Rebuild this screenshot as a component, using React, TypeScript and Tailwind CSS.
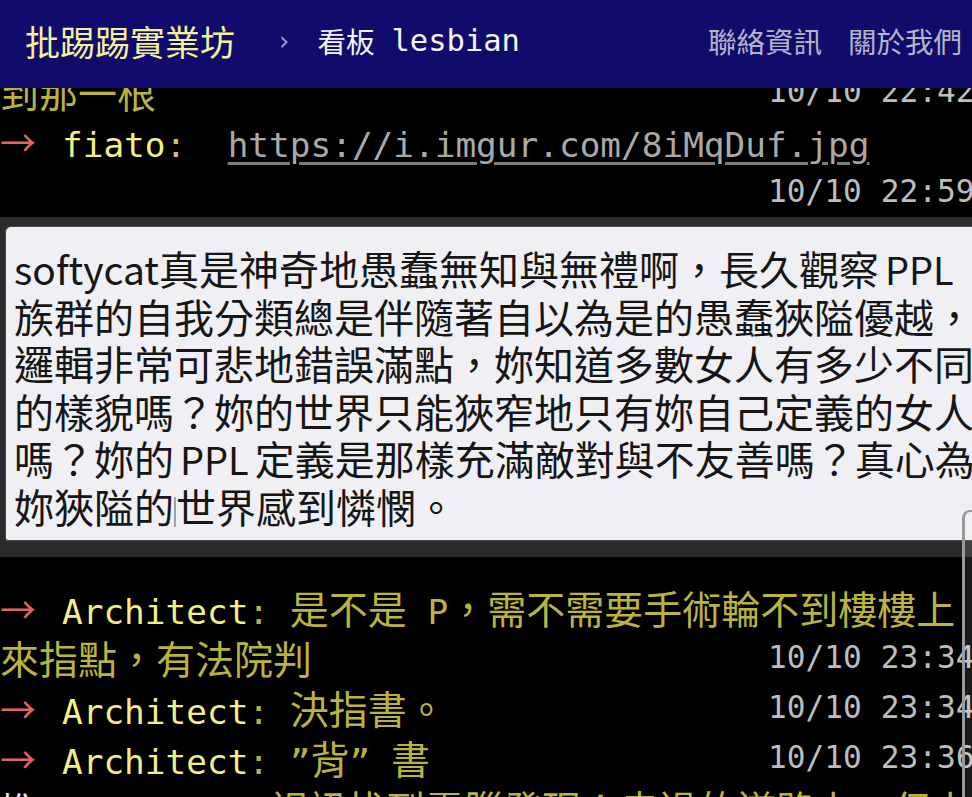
import React from "react";

const MONO_RE = /[\x00-\x7F”“]/;

function Mixed({ text }: { text: string }) {
  const parts = text.match(/[\x00-\x7F”“]+|[^\x00-\x7F”“]+/g) || [];
  return (
    <>
      {parts.map((p, i) =>
        MONO_RE.test(p[0]) ? (
          <span key={i} className="font-['DejaVu_Sans_Mono',monospace] text-[34.4px]">
            {p}
          </span>
        ) : (
          <span key={i} className="font-['Noto_Sans_CJK_TC',sans-serif] text-[39px]">
            {p}
          </span>
        )
      )}
    </>
  );
}

function Row({ children, time }: { children: React.ReactNode; time?: string }) {
  return (
    <div className="h-[50px] flex whitespace-pre">
      <div className="min-w-[768px] shrink-0 leading-[48px]">{children}</div>
      {time && (
        <div className="leading-[48px] font-['DejaVu_Sans_Mono',monospace] text-[31.2px] text-[#bdbdbd]">
          {time}
        </div>
      )}
    </div>
  );
}

function Tag() {
  return (
    <span className="inline-block w-[62px] font-['Noto_Sans_CJK_TC',sans-serif] text-[36px] text-[#e06464]">→</span>
  );
}

function User({ name }: { name: string }) {
  return (
    <span className="font-['DejaVu_Sans_Mono',monospace] text-[34.4px] text-[#f3ef84]">{name}</span>
  );
}

function Content({ text }: { text: string }) {
  return (
    <span className="text-[#bab43c]">
      <Mixed text={text} />
    </span>
  );
}

function Latin({ children }: { children: React.ReactNode }) {
  return <span className="text-[38px] mx-[6px]">{children}</span>;
}

export default function App() {
  return (
    <div className="w-[972px] h-[797px] overflow-hidden bg-black relative flex flex-col">
      <header className="h-[88px] shrink-0 bg-[#110c6c] flex items-center relative z-10 pb-[6px] whitespace-nowrap">
        <span className="ml-[25px] text-[35px] text-[#f5f19a] font-['Noto_Sans_CJK_TC',sans-serif]">批踢踢實業坊</span>
        <span className="ml-[44px] text-[26px] text-[#9c9cd8] font-['DejaVu_Sans',sans-serif]">›</span>
        <span className="ml-[28px] text-[28.5px] text-[#f4f4f4] font-['Noto_Sans_CJK_TC',sans-serif]">看板</span>
        <span className="ml-[17px] text-[30.5px] text-[#f4f4f4] font-['DejaVu_Sans_Mono',monospace]">lesbian</span>
        <div className="ml-auto mr-[10px] flex gap-[26px] text-[28.5px] text-[#b4b4c8] font-['Noto_Sans_CJK_TC',sans-serif]">
          <span>聯絡資訊</span>
          <span>關於我們</span>
        </div>
      </header>

      <main className="-mt-[21px] flex flex-col">
        <Row time="10/10 22:42">
          <Content text="到那一根" />
        </Row>
        <Row>
          <Tag />
          <User name="fiato" />
          <span className="font-['DejaVu_Sans_Mono',monospace] text-[34.4px] text-[#c8c470]">:  </span>
          <span className="font-['DejaVu_Sans_Mono',monospace] text-[34.4px] text-[#a9a9a9] underline decoration-[#7c7c7c] decoration-[3px] underline-offset-[5px]">
            https://i.imgur.com/8iMqDuf.jpg
          </span>
        </Row>
        <Row time="10/10 22:59">
          <span></span>
        </Row>

        <div className="h-[340px] bg-[#2b2b2b] pt-[9px] pl-[5px]">
          <div className="h-[315px] bg-[#efeff4] border border-[#4a4a4a] border-r-0 rounded-tl-[6px] rounded-bl-[3px] pl-[8px] pt-[18px] text-[40px] leading-[47.5px] text-[#161616] font-['Noto_Sans_CJK_TC',sans-serif] whitespace-nowrap overflow-hidden">
            <div>
              <span className="text-[39px]">softycat</span>真是神奇地愚蠢無知與無禮啊，長久觀察<Latin>PPL</Latin>
            </div>
            <div>族群的自我分類總是伴隨著自以為是的愚蠢狹隘優越，</div>
            <div>邏輯非常可悲地錯誤滿點，妳知道多數女人有多少不同</div>
            <div>的樣貌嗎？妳的世界只能狹窄地只有妳自己定義的女人</div>
            <div>
              嗎？妳的<Latin>PPL</Latin>定義是那樣充滿敵對與不友善嗎？真心為
            </div>
            <div>
              妳狹隘的
              <span className="inline-block w-[2px] h-[30px] bg-[#a0a0a0] align-[-4px]"></span>
              世界感到憐憫。
            </div>
          </div>
        </div>

        <div className="mt-[26px] flex flex-col">
          <Row>
            <Tag />
            <User name="Architect" />
            <Content text=": 是不是 P，需不需要手術輪不到樓樓上" />
          </Row>
          <Row time="10/10 23:34">
            <Content text="來指點，有法院判" />
          </Row>
          <Row time="10/10 23:34">
            <Tag />
            <User name="Architect" />
            <Content text=": 決指書。" />
          </Row>
          <Row time="10/10 23:36">
            <Tag />
            <User name="Architect" />
            <Content text=": ”背” 書" />
          </Row>
          <Row>
            <span className="inline-block w-[62px] font-['Noto_Sans_CJK_TC',sans-serif] text-[36px] text-[#f0f0f0]">推</span>
            <User name="softcat" />
            <Content text=":  視訊找到電腦發現！走過的道路上，但上" />
          </Row>
        </div>
      </main>

      <div className="absolute left-[962px] top-[510px] w-[12px] bottom-0 border-l-[3px] border-t-[2px] border-[#9a9a9a] rounded-tl-[8px] bg-white/10"></div>
    </div>
  );
}
